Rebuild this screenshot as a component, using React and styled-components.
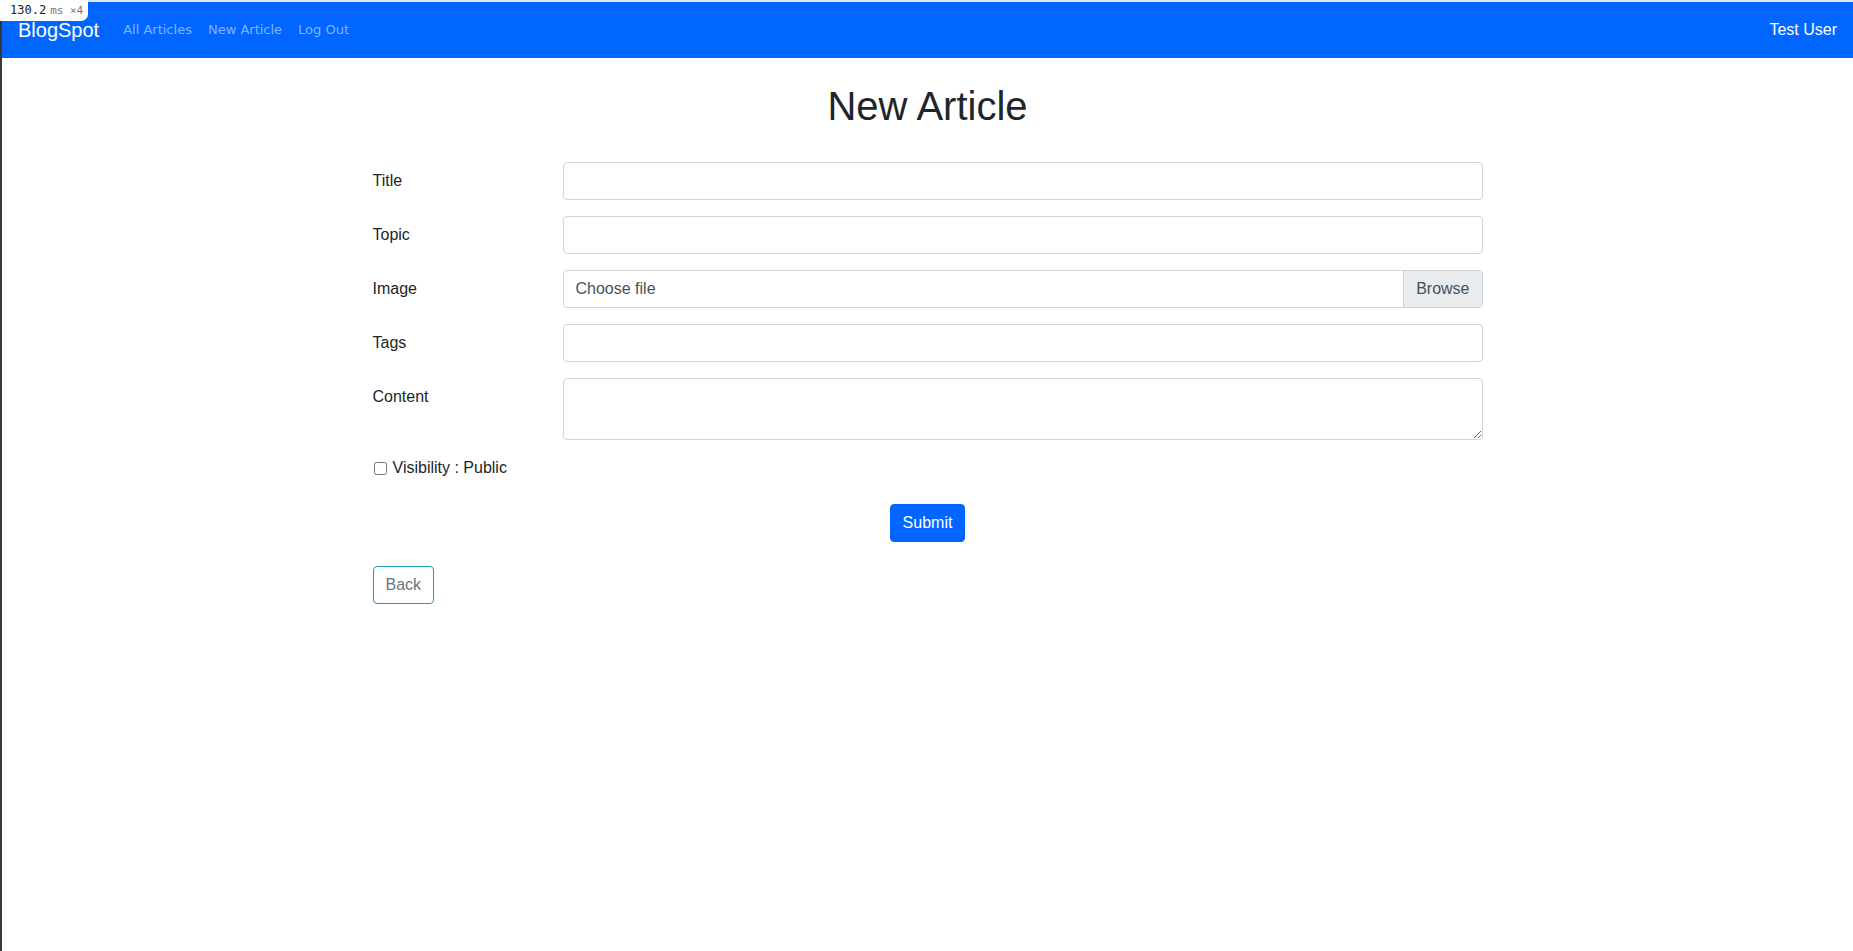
import styled, { createGlobalStyle } from "styled-components";

const GlobalStyle = createGlobalStyle`
  *, *::before, *::after {
    box-sizing: border-box;
  }

  body {
    margin: 0;
    font-family: "Liberation Sans", Arial, sans-serif;
    font-size: 16px;
    line-height: 1.5;
    color: #212529;
    background: #fff;
  }
`;

const Frame = styled.div`
  position: relative;
  min-height: 100vh;
  border-left: 2px solid #35393d;
  border-top: 2px solid #e6e7e9;
`;

const TimingBadge = styled.div`
  position: absolute;
  top: -2px;
  left: -2px;
  z-index: 10;
  display: flex;
  align-items: baseline;
  gap: 4px;
  height: 21px;
  padding: 0 5px 0 10px;
  background: #fff;
  border-bottom-right-radius: 7px;
  font-family: "DejaVu Sans Mono", "Liberation Mono", monospace;
  line-height: 21px;

  b {
    font-weight: normal;
    font-size: 12px;
    color: #222;
  }

  span {
    font-size: 11px;
    color: #777;
  }
`;

const Navbar = styled.nav`
  display: flex;
  align-items: center;
  height: 56px;
  padding: 0 16px;
  background: #0066ff;
`;

const Brand = styled.a`
  margin-right: 16px;
  font-size: 20px;
  line-height: 30px;
  color: #fff;
  text-decoration: none;
`;

const NavLinks = styled.div`
  display: flex;
  flex: 1;
`;

const NavLink = styled.a`
  padding: 0 8px;
  font-family: "DejaVu Sans", sans-serif;
  font-size: 13px;
  color: rgba(255, 255, 255, 0.5);
  text-decoration: none;
`;

const UserName = styled.span`
  font-size: 16px;
  color: #fff;
`;

const Container = styled.main`
  max-width: 1140px;
  margin: 0 auto;
  padding: 24px 15px 40px;
`;

const PageTitle = styled.h1`
  margin: 0 0 32px;
  font-size: 40px;
  font-weight: 500;
  line-height: 1.2;
  text-align: center;
`;

const FormRow = styled.div`
  display: grid;
  grid-template-columns: 190px 1fr;
  margin-bottom: 16px;
`;

const FieldLabel = styled.label`
  padding-top: 7px;
  padding-bottom: 7px;
  line-height: 24px;
`;

const fieldBase = `
  display: block;
  width: 100%;
  padding: 6px 12px;
  font-family: "Liberation Sans", Arial, sans-serif;
  font-size: 16px;
  line-height: 24px;
  color: #495057;
  background: #fff;
  border: 1px solid #ced4da;
  border-radius: 4px;
  outline: none;
`;

const TextInput = styled.input`
  ${fieldBase}
  height: 38px;
`;

const TextArea = styled.textarea`
  ${fieldBase}
  height: 62px;
  resize: vertical;
`;

const FilePicker = styled.label`
  display: flex;
  height: 38px;
  border: 1px solid #ced4da;
  border-radius: 4px;
  overflow: hidden;
  color: #495057;
  cursor: pointer;

  input {
    display: none;
  }
`;

const FileName = styled.span`
  flex: 1;
  padding: 6px 12px;
  line-height: 24px;
`;

const BrowseButton = styled.span`
  padding: 6px 12px;
  line-height: 24px;
  background: #e9ecef;
  border-left: 1px solid #ced4da;
`;

const CheckRow = styled.label`
  display: flex;
  align-items: center;
  margin-bottom: 16px;
  line-height: 24px;

  input {
    width: 13px;
    height: 13px;
    margin: 0 6px 0 1px;
  }
`;

const SubmitRow = styled.div`
  display: flex;
  justify-content: center;
  margin-top: 24px;
`;

const Button = styled.button`
  height: 38px;
  padding: 6px 12px;
  font-family: "Liberation Sans", Arial, sans-serif;
  font-size: 16px;
  line-height: 24px;
  border-radius: 4px;
  cursor: pointer;
  color: ${(p) => (p.$outline ? "#6c757d" : "#fff")};
  background: ${(p) => (p.$outline ? "#fff" : "#0066ff")};
  border: 1px solid ${(p) => (p.$outline ? "#17a2b8" : "#0066ff")};
`;

const BackRow = styled.div`
  margin-top: 24px;
`;

const fields = [
  { id: "title", label: "Title" },
  { id: "topic", label: "Topic" },
];

const App = () => {
  return (
    <>
      <GlobalStyle />
      <Frame>
        <TimingBadge>
          <b>130.2</b>
          <span>ms ×4</span>
        </TimingBadge>

        <Navbar>
          <Brand href="#">BlogSpot</Brand>
          <NavLinks>
            <NavLink href="#">All Articles</NavLink>
            <NavLink href="#">New Article</NavLink>
            <NavLink href="#">Log Out</NavLink>
          </NavLinks>
          <UserName>Test User</UserName>
        </Navbar>

        <Container>
          <PageTitle>New Article</PageTitle>

          <form onSubmit={(e) => e.preventDefault()}>
            {fields.map((f) => (
              <FormRow key={f.id}>
                <FieldLabel htmlFor={f.id}>{f.label}</FieldLabel>
                <TextInput id={f.id} type="text" />
              </FormRow>
            ))}

            <FormRow>
              <FieldLabel htmlFor="image">Image</FieldLabel>
              <FilePicker>
                <input id="image" type="file" />
                <FileName>Choose file</FileName>
                <BrowseButton>Browse</BrowseButton>
              </FilePicker>
            </FormRow>

            <FormRow>
              <FieldLabel htmlFor="tags">Tags</FieldLabel>
              <TextInput id="tags" type="text" />
            </FormRow>

            <FormRow>
              <FieldLabel htmlFor="content">Content</FieldLabel>
              <TextArea id="content" rows={2} />
            </FormRow>

            <CheckRow>
              <input type="checkbox" />
              Visibility : Public
            </CheckRow>

            <SubmitRow>
              <Button type="submit">Submit</Button>
            </SubmitRow>
          </form>

          <BackRow>
            <Button $outline type="button">Back</Button>
          </BackRow>
        </Container>
      </Frame>
    </>
  );
};

export default App;
